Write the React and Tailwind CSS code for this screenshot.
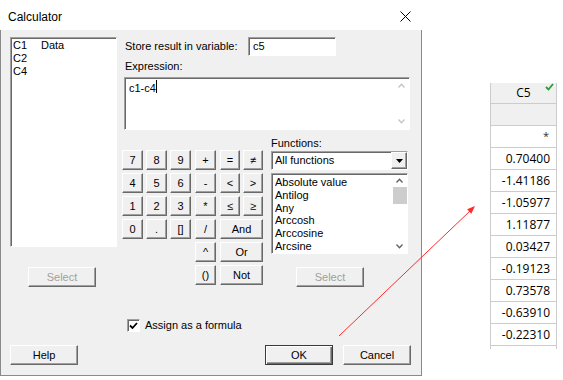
import React from 'react'

const raised =
  'bg-[#f0f0f0] border border-t-white border-l-white border-b-[#696969] border-r-[#696969] shadow-[inset_-1px_-1px_0_#a0a0a0]'
const sunken =
  'bg-white border border-t-[#a0a0a0] border-l-[#a0a0a0] border-b-white border-r-white shadow-[inset_1px_1px_0_#696969]'

function Btn({ children, className = '', disabled }) {
  return (
    <div
      className={`${raised} flex items-center justify-center leading-none ${
        disabled ? 'text-[#a0a0a0]' : 'text-black'
      } ${className}`}
    >
      {children}
    </div>
  )
}

function Chevron({ up, color }) {
  return (
    <svg width="7" height="5" viewBox="0 0 7 5">
      <path
        d={up ? 'M0.5 4.5 L3.5 1.2 L6.5 4.5' : 'M0.5 0.5 L3.5 3.8 L6.5 0.5'}
        fill="none"
        stroke={color}
        strokeWidth="1.3"
      />
    </svg>
  )
}

const nums = ['7', '8', '9', '4', '5', '6', '1', '2', '3', '0', '.', '[]']
const ops = ['+', '-', '*', '/', '^', '()']
const funcs = ['Absolute value', 'Antilog', 'Any', 'Arccosh', 'Arccosine', 'Arcsine']
const values = ['0.70400', '-1.41186', '-1.05977', '1.11877', '0.03427', '-0.19123', '0.73578', '-0.63910', '-0.22310']

function Keypad() {
  return (
    <div className="mt-[13px] flex items-start">
      <div className="grid grid-cols-[21px_21px_21px] auto-rows-[20px] gap-[3px]">
        {nums.map((n) => (
          <Btn key={n}>{n}</Btn>
        ))}
      </div>
      <div className="ml-[4px] w-[21px] grid auto-rows-[20px] gap-[3px]">
        {ops.map((o) => (
          <Btn key={o}>{o}</Btn>
        ))}
      </div>
      <div className="ml-[4px] grid grid-cols-[20px_20px] auto-rows-[20px] gap-[3px]">
        <Btn>=</Btn>
        <Btn>≠</Btn>
        <Btn>&lt;</Btn>
        <Btn>&gt;</Btn>
        <Btn>≤</Btn>
        <Btn>≥</Btn>
        <Btn className="col-span-2">And</Btn>
        <Btn className="col-span-2">Or</Btn>
        <Btn className="col-span-2">Not</Btn>
      </div>
    </div>
  )
}

function Functions() {
  return (
    <div className="ml-[8px] w-[137px] flex flex-col">
      <div className="h-[12px] leading-[12px]">Functions:</div>
      <div className={`${sunken} mt-[2px] h-[19px] flex items-center`}>
        <span className="flex-1 pl-[3px]">All functions</span>
        <div className={`${raised} w-[16px] h-[17px] flex items-center justify-center`}>
          <svg width="7" height="4" viewBox="0 0 7 4">
            <path d="M0 0 H7 L3.5 4 Z" fill="#000" />
          </svg>
        </div>
      </div>
      <div className={`${sunken} mt-[3px] h-[81px] flex`}>
        <div className="flex-1 pl-[3px] pt-[2px] leading-[12.8px] overflow-hidden">
          {funcs.map((f) => (
            <div key={f}>{f}</div>
          ))}
        </div>
        <div className="w-[15px] flex flex-col items-center pt-[4px] pb-[4px]">
          <Chevron up color="#606060" />
          <div className="mt-[4px] w-[14px] h-[17px] bg-[#cdcdcd]" />
          <div className="flex-1" />
          <Chevron color="#606060" />
        </div>
      </div>
      <Btn disabled className="mt-[13px] ml-[25px] w-[68px] h-[20px]">
        Select
      </Btn>
    </div>
  )
}

function Dialog() {
  return (
    <div className="w-[422px] h-[376px] flex flex-col shrink-0">
      <div className="h-[30px] bg-white flex items-center justify-between pl-[8px] pr-[11px] pt-[3px]">
        <span className="text-[12px]">Calculator</span>
        <svg width="11" height="11" viewBox="0 0 11 11">
          <path d="M0.5 0.5 L10.5 10.5 M10.5 0.5 L0.5 10.5" stroke="#000" strokeWidth="1" />
        </svg>
      </div>
      <div className="flex-1 bg-[#f0f0f0] border-l border-r border-b border-[#8a8a8a] pl-[9px] pt-[7px] flex flex-col">
        <div className="flex">
          <div className="w-[107px] flex flex-col">
            <div className={`${sunken} h-[210px] pl-[2px] pt-[1px] leading-[13px]`}>
              <div className="flex">
                <span className="w-[28px]">C1</span>
                <span>Data</span>
              </div>
              <div>C2</div>
              <div>C4</div>
            </div>
            <Btn disabled className="mt-[20px] ml-[18px] w-[68px] h-[20px]">
              Select
            </Btn>
          </div>
          <div className="ml-[5px] w-[288px] flex flex-col">
            <div className="flex items-center h-[19px]">
              <span className="w-[126px] pl-[3px]">Store result in variable:</span>
              <div className={`${sunken} w-[88px] h-[19px] flex items-center pl-[4px]`}>c5</div>
            </div>
            <div className="mt-[4px] h-[12px] leading-[12px] pl-[3px]">Expression:</div>
            <div className={`${sunken} mt-[5px] ml-[2px] w-[286px] h-[53px] flex`}>
              <div className="flex-1 pl-[4px] pt-[2px] flex items-start">
                <span>c1-c4</span>
                <span className="w-px h-[13px] bg-black" />
              </div>
              <div className="w-[15px] flex flex-col items-center justify-between py-[5px]">
                <Chevron up color="#c4c4c4" />
                <Chevron color="#c4c4c4" />
              </div>
            </div>
            <div className="mt-[7px] flex items-start">
              <Keypad />
              <Functions />
            </div>
          </div>
        </div>
        <div className="mt-[32px] ml-[117px] flex items-center h-[13px]">
          <div className={`${sunken} w-[13px] h-[13px] flex items-center justify-center`}>
            <svg width="9" height="8" viewBox="0 0 9 8">
              <path d="M1 3.5 L3.5 6 L8 1" fill="none" stroke="#000" strokeWidth="1.8" />
            </svg>
          </div>
          <span className="ml-[5px]">Assign as a formula</span>
        </div>
        <div className="mt-[13px] flex">
          <Btn className="w-[68px] h-[20px]">Help</Btn>
          <div className="ml-[187px] w-[68px] h-[20px] flex items-center justify-center border border-[#3a3a3a] bg-[#f0f0f0] shadow-[inset_1px_1px_0_#fff,inset_-1px_-1px_0_#696969,inset_-2px_-2px_0_#a0a0a0]">
            OK
          </div>
          <Btn className="ml-[10px] w-[68px] h-[20px]">Cancel</Btn>
        </div>
      </div>
    </div>
  )
}

export default function App() {
  return (
    <div className="relative w-[563px] h-[380px] bg-white flex font-['Liberation_Sans',Arial,sans-serif] text-[11px] text-black overflow-hidden">
      <Dialog />
      <div className="ml-[68px] mt-[83px] w-[67px] self-start flex flex-col border-x border-[#cccccc] font-['Open_Sans','Noto_Sans',sans-serif] text-[12px]">
        <div className="relative h-[21px] bg-[#f0f0f0] border-b border-[#cccccc] flex items-center justify-center">
          C5
          <svg className="absolute right-[2px] top-0" width="9" height="8" viewBox="0 0 9 8">
            <path d="M1 4 L3.5 6.5 L8 1" fill="none" stroke="#2e9a3a" strokeWidth="1.8" />
          </svg>
        </div>
        <div className="h-[22px] bg-[#f0f0f0] border-b border-[#cccccc]" />
        <div className="h-[22px] border-b border-[#cccccc] flex items-center justify-end pr-[7px] text-[11px] text-[#333]">
          *
        </div>
        {values.map((v, i) => (
          <div key={i} className="h-[22px] border-b border-[#cccccc] flex items-center justify-end pr-[6px]">
            {v}
          </div>
        ))}
        <div className="h-[3px]" />
      </div>
      <svg className="absolute left-0 top-0 pointer-events-none" width="563" height="380">
        <line x1="339" y1="336" x2="470" y2="211" stroke="#ff2a2a" strokeWidth="1" />
        <polygon points="475,206 471.3,213.7 467.1,209.3" fill="#ff2a2a" />
      </svg>
    </div>
  )
}
